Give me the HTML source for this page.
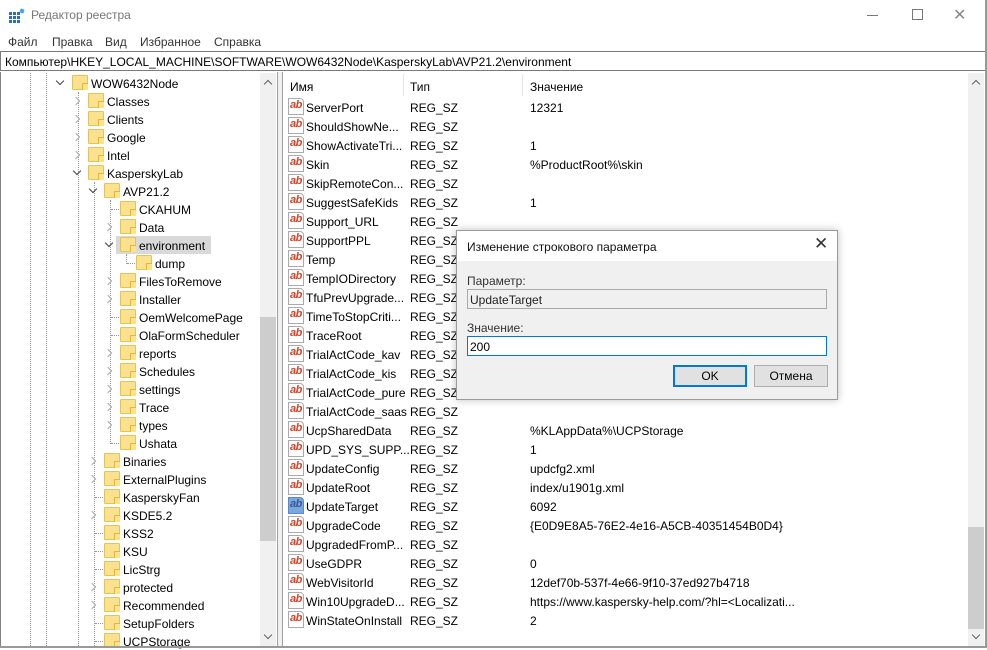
<!DOCTYPE html>
<html><head><meta charset="utf-8"><style>
*{margin:0;padding:0;box-sizing:border-box}
body{width:987px;height:648px;overflow:hidden;background:#fff;font-family:"Liberation Sans","DejaVu Sans",sans-serif;font-size:12px;color:#000;position:relative}
.a{position:absolute;white-space:nowrap}
.f{position:absolute;width:16px;height:15px;background:#fbe28e;border:1px solid #e5c35a;border-radius:1px}
.f::after{content:"";position:absolute;right:-1px;bottom:-1px;width:5px;height:6px;border-left:1px solid #e0b840;border-top:1px solid #e0b840;background:#fbe28e}
.r{position:absolute;left:0;width:258px;height:18px}
.r span{position:absolute;top:3px}
.ch{position:absolute;width:6px;height:6px;border-right:1.5px solid #a6a6a6;border-bottom:1.5px solid #a6a6a6;transform:rotate(-45deg);top:6px;background:#fff}
.cd{position:absolute;width:6px;height:6px;border-right:1.5px solid #404040;border-bottom:1.5px solid #404040;transform:rotate(45deg);top:4px}
.hd{position:absolute;height:1px;border-top:1px dotted #999;top:9px}
.vd{position:absolute;width:1px;border-left:1px dotted #999}
.v{position:absolute;left:284px;width:684px;height:19px}
.v span{position:absolute;top:4px}
.ab{position:absolute;left:4px;top:1px;width:16px;height:17px;border:1px solid #aaa;border-radius:0 4px 0 0;background:#fff;color:#d8442a;font-weight:bold;font-size:11px;line-height:13px;padding-left:1px;letter-spacing:-0.5px;overflow:hidden}
.ab.s{background:#7aa7dc;color:#3a5a9a;border-color:#5a88c8}
</style></head><body>
<div class="a" style="left:9px;top:8px;width:16px;height:16px">
<svg width="16" height="16"><g fill="#1b74c9"><rect x="0" y="4" width="3" height="3"/><rect x="4" y="4" width="3" height="3"/><rect x="8" y="4" width="3" height="3"/><rect x="0" y="8" width="3" height="3"/><rect x="4" y="8" width="3" height="3"/><rect x="8" y="8" width="3" height="3"/><rect x="0" y="12" width="3" height="3"/><rect x="4" y="12" width="3" height="3"/><rect x="8" y="12" width="3" height="3"/></g><rect x="11" y="1" width="4" height="4" fill="#4aa0e6" transform="rotate(20 13 3)"/></svg></div>
<div class="a" style="left:31px;top:8px;color:#777;font-size:12px">Редактор реестра</div>
<div class="a" style="left:867px;top:15px;width:11px;height:1px;background:#777"></div>
<div class="a" style="left:912px;top:9px;width:11px;height:11px;border:1px solid #777"></div>
<div class="a" style="left:953px;top:5px;color:#888;font-size:16px">✕</div>
<div class="a" style="left:8px;top:35px;color:#333">Файл</div>
<div class="a" style="left:52px;top:35px;color:#333">Правка</div>
<div class="a" style="left:105px;top:35px;color:#333">Вид</div>
<div class="a" style="left:140px;top:35px;color:#333">Избранное</div>
<div class="a" style="left:214px;top:35px;color:#333">Справка</div>
<div class="a" style="left:0;top:51px;width:987px;height:20px;border:1px solid #7a7a7a;border-right-color:#888"></div>
<div class="a" style="left:5px;top:55px">Компьютер\HKEY_LOCAL_MACHINE\SOFTWARE\WOW6432Node\KasperskyLab\AVP21.2\environment</div>
<div class="a" style="left:0;top:72px;width:1px;height:576px;background:#828282"></div>
<div class="a" style="left:277px;top:72px;width:1px;height:576px;background:#a0a0a0"></div>
<div class="a" style="left:282px;top:72px;width:1px;height:576px;background:#a0a0a0"></div>
<div class="a" style="left:278px;top:72px;width:4px;height:576px;background:#f0f0f0"></div>
<div class="a" style="left:985px;top:0;width:2px;height:648px;background:#999"></div>
<div class="a" style="left:0;top:646px;width:987px;height:2px;background:#999"></div>
<div class="a" style="left:260px;top:73px;width:16px;height:573px;background:#f0f0f0"></div>
<div class="a" style="left:260px;top:317px;width:16px;height:224px;background:#cdcdcd"></div>
<div class="a" style="left:265px;top:81px;width:6px;height:6px;border-left:1.5px solid #606060;border-top:1.5px solid #606060;transform:rotate(45deg)"></div>
<div class="a" style="left:265px;top:632px;width:6px;height:6px;border-right:1.5px solid #606060;border-bottom:1.5px solid #606060;transform:rotate(45deg)"></div>
<div class="a" style="left:968px;top:73px;width:16px;height:573px;background:#f0f0f0"></div>
<div class="a" style="left:968px;top:527px;width:16px;height:102px;background:#cdcdcd"></div>
<div class="a" style="left:973px;top:81px;width:6px;height:6px;border-left:1.5px solid #606060;border-top:1.5px solid #606060;transform:rotate(45deg)"></div>
<div class="a" style="left:973px;top:632px;width:6px;height:6px;border-right:1.5px solid #606060;border-bottom:1.5px solid #606060;transform:rotate(45deg)"></div>
<div class="vd" style="left:30px;top:73px;height:573px"></div>
<div class="vd" style="left:46px;top:73px;height:573px"></div>
<div class="vd" style="left:78px;top:92px;height:554px"></div>
<div class="vd" style="left:94px;top:182px;height:464px"></div>
<div class="vd" style="left:110px;top:200px;height:244px"></div>
<div class="vd" style="left:126px;top:254px;height:10px"></div>
<div class="a" style="left:116px;top:236px;width:95px;height:18px;background:#d9d9d9"></div>
<div class="r" style="top:74px"><i class="cd" style="left:57px"></i><i class="f" style="left:72px;top:1px"></i><span style="left:91px">WOW6432Node</span></div>
<div class="r" style="top:92px"><i class="ch" style="left:73px"></i><i class="f" style="left:88px;top:1px"></i><span style="left:107px">Classes</span></div>
<div class="r" style="top:110px"><i class="ch" style="left:73px"></i><i class="f" style="left:88px;top:1px"></i><span style="left:107px">Clients</span></div>
<div class="r" style="top:128px"><i class="ch" style="left:73px"></i><i class="f" style="left:88px;top:1px"></i><span style="left:107px">Google</span></div>
<div class="r" style="top:146px"><i class="ch" style="left:73px"></i><i class="f" style="left:88px;top:1px"></i><span style="left:107px">Intel</span></div>
<div class="r" style="top:164px"><i class="cd" style="left:74px"></i><i class="f" style="left:88px;top:1px"></i><span style="left:107px">KasperskyLab</span></div>
<div class="r" style="top:182px"><i class="cd" style="left:90px"></i><i class="f" style="left:104px;top:1px"></i><span style="left:123px">AVP21.2</span></div>
<div class="r" style="top:200px"><i class="hd" style="left:111px;width:8px"></i><i class="f" style="left:120px;top:1px"></i><span style="left:139px">CKAHUM</span></div>
<div class="r" style="top:218px"><i class="ch" style="left:105px"></i><i class="f" style="left:120px;top:1px"></i><span style="left:139px">Data</span></div>
<div class="r" style="top:236px"><i class="cd" style="left:106px"></i><i class="f" style="left:120px;top:1px"></i><span style="left:139px">environment</span></div>
<div class="r" style="top:254px"><i class="hd" style="left:127px;width:8px"></i><i class="f" style="left:136px;top:1px"></i><span style="left:155px">dump</span></div>
<div class="r" style="top:272px"><i class="ch" style="left:105px"></i><i class="f" style="left:120px;top:1px"></i><span style="left:139px">FilesToRemove</span></div>
<div class="r" style="top:290px"><i class="ch" style="left:105px"></i><i class="f" style="left:120px;top:1px"></i><span style="left:139px">Installer</span></div>
<div class="r" style="top:308px"><i class="hd" style="left:111px;width:8px"></i><i class="f" style="left:120px;top:1px"></i><span style="left:139px">OemWelcomePage</span></div>
<div class="r" style="top:326px"><i class="hd" style="left:111px;width:8px"></i><i class="f" style="left:120px;top:1px"></i><span style="left:139px">OlaFormScheduler</span></div>
<div class="r" style="top:344px"><i class="ch" style="left:105px"></i><i class="f" style="left:120px;top:1px"></i><span style="left:139px">reports</span></div>
<div class="r" style="top:362px"><i class="ch" style="left:105px"></i><i class="f" style="left:120px;top:1px"></i><span style="left:139px">Schedules</span></div>
<div class="r" style="top:380px"><i class="ch" style="left:105px"></i><i class="f" style="left:120px;top:1px"></i><span style="left:139px">settings</span></div>
<div class="r" style="top:398px"><i class="ch" style="left:105px"></i><i class="f" style="left:120px;top:1px"></i><span style="left:139px">Trace</span></div>
<div class="r" style="top:416px"><i class="ch" style="left:105px"></i><i class="f" style="left:120px;top:1px"></i><span style="left:139px">types</span></div>
<div class="r" style="top:434px"><i class="hd" style="left:111px;width:8px"></i><i class="f" style="left:120px;top:1px"></i><span style="left:139px">Ushata</span></div>
<div class="r" style="top:452px"><i class="ch" style="left:89px"></i><i class="f" style="left:104px;top:1px"></i><span style="left:123px">Binaries</span></div>
<div class="r" style="top:470px"><i class="ch" style="left:89px"></i><i class="f" style="left:104px;top:1px"></i><span style="left:123px">ExternalPlugins</span></div>
<div class="r" style="top:488px"><i class="hd" style="left:95px;width:8px"></i><i class="f" style="left:104px;top:1px"></i><span style="left:123px">KasperskyFan</span></div>
<div class="r" style="top:506px"><i class="ch" style="left:89px"></i><i class="f" style="left:104px;top:1px"></i><span style="left:123px">KSDE5.2</span></div>
<div class="r" style="top:524px"><i class="hd" style="left:95px;width:8px"></i><i class="f" style="left:104px;top:1px"></i><span style="left:123px">KSS2</span></div>
<div class="r" style="top:542px"><i class="hd" style="left:95px;width:8px"></i><i class="f" style="left:104px;top:1px"></i><span style="left:123px">KSU</span></div>
<div class="r" style="top:560px"><i class="hd" style="left:95px;width:8px"></i><i class="f" style="left:104px;top:1px"></i><span style="left:123px">LicStrg</span></div>
<div class="r" style="top:578px"><i class="ch" style="left:89px"></i><i class="f" style="left:104px;top:1px"></i><span style="left:123px">protected</span></div>
<div class="r" style="top:596px"><i class="ch" style="left:89px"></i><i class="f" style="left:104px;top:1px"></i><span style="left:123px">Recommended</span></div>
<div class="r" style="top:614px"><i class="hd" style="left:95px;width:8px"></i><i class="f" style="left:104px;top:1px"></i><span style="left:123px">SetupFolders</span></div>
<div class="r" style="top:632px"><i class="hd" style="left:95px;width:8px"></i><i class="f" style="left:104px;top:1px"></i><span style="left:123px">UCPStorage</span></div>
<div class="a" style="left:1px;top:646px;width:259px;height:2px;background:#999"></div>
<div class="a" style="left:290px;top:80px">Имя</div>
<div class="a" style="left:403px;top:74px;width:1px;height:22px;background:#e5e5e5"></div>
<div class="a" style="left:410px;top:80px">Тип</div>
<div class="a" style="left:522px;top:74px;width:1px;height:22px;background:#e5e5e5"></div>
<div class="a" style="left:530px;top:80px">Значение</div>
<div class="v" style="top:97px"><i class="ab">ab</i><span style="left:22px">ServerPort</span><span style="left:126px">REG_SZ</span><span style="left:246px">12321</span></div>
<div class="v" style="top:116px"><i class="ab">ab</i><span style="left:22px">ShouldShowNe...</span><span style="left:126px">REG_SZ</span></div>
<div class="v" style="top:135px"><i class="ab">ab</i><span style="left:22px">ShowActivateTri...</span><span style="left:126px">REG_SZ</span><span style="left:246px">1</span></div>
<div class="v" style="top:154px"><i class="ab">ab</i><span style="left:22px">Skin</span><span style="left:126px">REG_SZ</span><span style="left:246px">%ProductRoot%\skin</span></div>
<div class="v" style="top:173px"><i class="ab">ab</i><span style="left:22px">SkipRemoteCon...</span><span style="left:126px">REG_SZ</span></div>
<div class="v" style="top:192px"><i class="ab">ab</i><span style="left:22px">SuggestSafeKids</span><span style="left:126px">REG_SZ</span><span style="left:246px">1</span></div>
<div class="v" style="top:211px"><i class="ab">ab</i><span style="left:22px">Support_URL</span><span style="left:126px">REG_SZ</span></div>
<div class="v" style="top:230px"><i class="ab">ab</i><span style="left:22px">SupportPPL</span><span style="left:126px">REG_SZ</span></div>
<div class="v" style="top:249px"><i class="ab">ab</i><span style="left:22px">Temp</span><span style="left:126px">REG_SZ</span></div>
<div class="v" style="top:268px"><i class="ab">ab</i><span style="left:22px">TempIODirectory</span><span style="left:126px">REG_SZ</span></div>
<div class="v" style="top:287px"><i class="ab">ab</i><span style="left:22px">TfuPrevUpgrade...</span><span style="left:126px">REG_SZ</span></div>
<div class="v" style="top:306px"><i class="ab">ab</i><span style="left:22px">TimeToStopCriti...</span><span style="left:126px">REG_SZ</span></div>
<div class="v" style="top:325px"><i class="ab">ab</i><span style="left:22px">TraceRoot</span><span style="left:126px">REG_SZ</span></div>
<div class="v" style="top:344px"><i class="ab">ab</i><span style="left:22px">TrialActCode_kav</span><span style="left:126px">REG_SZ</span></div>
<div class="v" style="top:363px"><i class="ab">ab</i><span style="left:22px">TrialActCode_kis</span><span style="left:126px">REG_SZ</span></div>
<div class="v" style="top:382px"><i class="ab">ab</i><span style="left:22px">TrialActCode_pure</span><span style="left:126px">REG_SZ</span></div>
<div class="v" style="top:401px"><i class="ab">ab</i><span style="left:22px">TrialActCode_saas</span><span style="left:126px">REG_SZ</span></div>
<div class="v" style="top:420px"><i class="ab">ab</i><span style="left:22px">UcpSharedData</span><span style="left:126px">REG_SZ</span><span style="left:246px">%KLAppData%\UCPStorage</span></div>
<div class="v" style="top:439px"><i class="ab">ab</i><span style="left:22px">UPD_SYS_SUPP...</span><span style="left:126px">REG_SZ</span><span style="left:246px">1</span></div>
<div class="v" style="top:458px"><i class="ab">ab</i><span style="left:22px">UpdateConfig</span><span style="left:126px">REG_SZ</span><span style="left:246px">updcfg2.xml</span></div>
<div class="v" style="top:477px"><i class="ab">ab</i><span style="left:22px">UpdateRoot</span><span style="left:126px">REG_SZ</span><span style="left:246px">index/u1901g.xml</span></div>
<div class="v" style="top:496px"><i class="ab s">ab</i><span style="left:22px">UpdateTarget</span><span style="left:126px">REG_SZ</span><span style="left:246px">6092</span></div>
<div class="v" style="top:515px"><i class="ab">ab</i><span style="left:22px">UpgradeCode</span><span style="left:126px">REG_SZ</span><span style="left:246px">{E0D9E8A5-76E2-4e16-A5CB-40351454B0D4}</span></div>
<div class="v" style="top:534px"><i class="ab">ab</i><span style="left:22px">UpgradedFromP...</span><span style="left:126px">REG_SZ</span></div>
<div class="v" style="top:553px"><i class="ab">ab</i><span style="left:22px">UseGDPR</span><span style="left:126px">REG_SZ</span><span style="left:246px">0</span></div>
<div class="v" style="top:572px"><i class="ab">ab</i><span style="left:22px">WebVisitorId</span><span style="left:126px">REG_SZ</span><span style="left:246px">12def70b-537f-4e66-9f10-37ed927b4718</span></div>
<div class="v" style="top:591px"><i class="ab">ab</i><span style="left:22px">Win10UpgradeD...</span><span style="left:126px">REG_SZ</span><span style="left:246px">https://www.kaspersky-help.com/?hl=&lt;Localizati...</span></div>
<div class="v" style="top:610px"><i class="ab">ab</i><span style="left:22px">WinStateOnInstall</span><span style="left:126px">REG_SZ</span><span style="left:246px">2</span></div>
<div class="a" style="left:456px;top:230px;width:382px;height:170px;background:#f0f0f0;border:1px solid #9a9a9a;box-shadow:0 0 8px rgba(0,0,0,0.25)">
 <div class="a" style="left:0;top:0;width:380px;height:30px;background:#fff"></div>
 <div class="a" style="left:10px;top:9px;color:#111">Изменение строкового параметра</div>
 <div class="a" style="left:357px;top:3px;font-size:17px;color:#333">✕</div>
 <div class="a" style="left:10px;top:43px;color:#333">Параметр:</div>
 <div class="a" style="left:10px;top:58px;width:360px;height:20px;border:1px solid #a8a8a8;background:#f0f0f0"></div>
 <div class="a" style="left:13px;top:62px;color:#222">UpdateTarget</div>
 <div class="a" style="left:10px;top:90px;color:#333">Значение:</div>
 <div class="a" style="left:10px;top:105px;width:360px;height:20px;border:1px solid #0078d7;background:#fff"></div>
 <div class="a" style="left:13px;top:109px;color:#000">200</div>
 <div class="a" style="left:216px;top:134px;width:74px;height:22px;border:2px solid #0078d7;background:#e1e1e1;text-align:center;line-height:19px">OK</div>
 <div class="a" style="left:297px;top:134px;width:74px;height:22px;border:1px solid #adadad;background:#e1e1e1;text-align:center;line-height:21px">Отмена</div>
</div>
</body></html>
